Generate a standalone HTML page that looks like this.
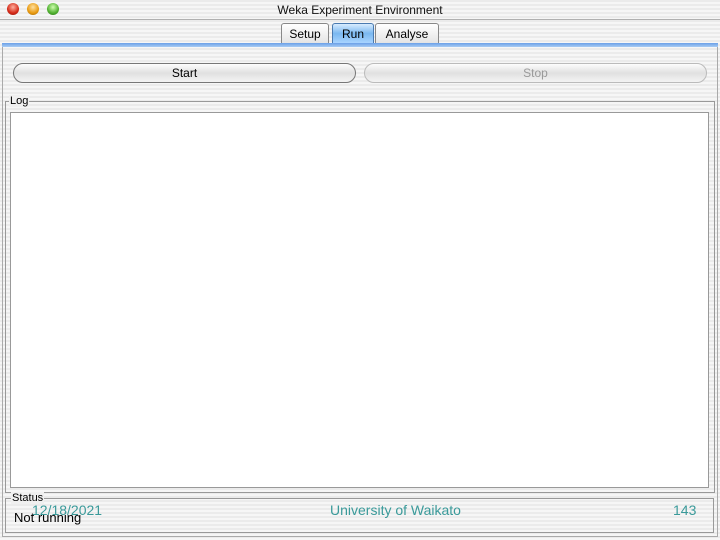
<!DOCTYPE html>
<html><head><style>
body{margin:0;width:720px;height:540px;overflow:hidden;position:relative;font-family:"Liberation Sans",sans-serif;
background:repeating-linear-gradient(180deg,#ebebeb 0,#ebebeb 2px,#f6f6f6 2px,#f6f6f6 4px);}
.a{position:absolute}
.title{left:0;top:0;width:720px;height:19px;border-bottom:1px solid #b0b0b0;}
.dot{width:12px;height:12px;border-radius:50%;top:3px}
.tab{top:23px;height:20px;border:1px solid #888;border-bottom:none;border-radius:3px 3px 0 0;background:linear-gradient(#fff,#e4e4e4);font-size:12px;text-align:center;line-height:20px;box-sizing:border-box}
.btn{top:63px;height:20px;border:1px solid #777;border-radius:10px;background:linear-gradient(#fdfdfd,#e0e0e0 50%,#f3f3f3);font-size:12px;text-align:center;line-height:18px;box-sizing:border-box}
.box{border:1px solid #999;box-sizing:border-box}
.lbl{font-size:11px;background:#f0f0f0;padding:0 1px}
.t{color:#3a9a9a;font-size:14px;top:502px}
</style></head><body>
<div class="a title"></div>
<div class="a dot" style="left:7px;background:radial-gradient(circle at 50% 35%,#ffb0a0,#d42a18 60%,#8a1a10)"></div>
<div class="a dot" style="left:27px;background:radial-gradient(circle at 50% 35%,#ffe0a0,#e89a10 60%,#9a6008)"></div>
<div class="a dot" style="left:47px;background:radial-gradient(circle at 50% 35%,#d0ffb0,#50b030 60%,#2a7018)"></div>
<div class="a" style="left:0;width:720px;top:3px;text-align:center;font-size:12px;color:#111">Weka Experiment Environment</div>
<div class="a tab" style="left:281px;width:48px">Setup</div>
<div class="a tab" style="left:332px;width:42px;background:linear-gradient(#d8ecff,#7ab8f0 50%,#a8d4ff);border-color:#4a7ab0">Run</div>
<div class="a tab" style="left:375px;width:64px">Analyse</div>
<div class="a box" style="left:2px;top:43px;width:716px;height:494px;border-color:#aaa"></div>
<div class="a" style="left:2px;top:43px;width:716px;height:4px;background:linear-gradient(#6aa0e8,#a8ccf4)"></div>
<div class="a btn" style="left:13px;width:343px">Start</div>
<div class="a btn" style="left:364px;width:343px;color:#999;border-color:#bbb">Stop</div>
<div class="a box" style="left:5px;top:101px;width:710px;height:392px"></div>
<div class="a lbl" style="left:9px;top:95px">Log</div>
<div class="a" style="left:10px;top:112px;width:699px;height:376px;background:#fff;border:1px solid #999;box-sizing:border-box"></div>
<div class="a box" style="left:5px;top:498px;width:709px;height:35px"></div>
<div class="a lbl" style="left:11px;top:492px">Status</div>
<div class="a" style="left:14px;top:510px;font-size:13px;color:#000">Not running</div>
<div class="a t" style="left:32px">12/18/2021</div>
<div class="a t" style="left:330px">University of Waikato</div>
<div class="a t" style="left:673px">143</div>
</body></html>
